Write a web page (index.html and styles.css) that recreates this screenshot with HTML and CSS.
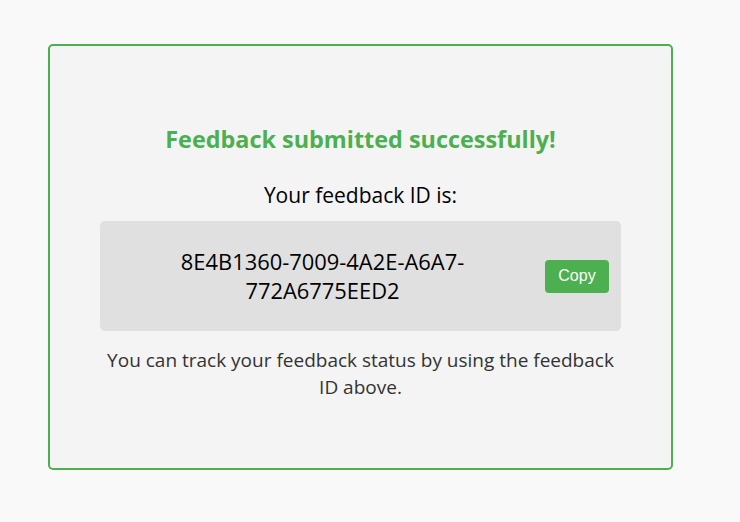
FILE: index.html
```html
<!DOCTYPE html>
<html lang="en">
<head>
<meta charset="utf-8">
<title>Feedback submitted</title>
<link rel="stylesheet" href="styles.css">
</head>
<body>
<div class="card">
  <h2 class="title">Feedback submitted successfully!</h2>
  <p class="label">Your feedback ID is:</p>
  <div class="id-box">
    <span class="id-text">8E4B1360-7009-4A2E-A6A7-772A6775EED2</span>
    <button class="copy-btn" type="button">Copy</button>
  </div>
  <p class="note">You can track your feedback status by using the feedback ID above.</p>
</div>
</body>
</html>
```

FILE: styles.css
```css
html, body {
  margin: 0;
  padding: 0;
}
body {
  background: #f9f9f9;
  font-family: "Open Sans", "Noto Sans", sans-serif;
  padding: 44px 0 0 48px;
  min-height: 100vh;
  box-sizing: border-box;
}
.card {
  width: 625px;
  box-sizing: border-box;
  border: 2px solid #4caf50;
  border-radius: 5px;
  background: #f4f4f4;
  padding: 77px 50px 67px;
  text-align: center;
}
.title {
  margin: 0;
  color: #4caf50;
  font-size: 23.4px;
  line-height: 32px;
  font-weight: 700;
}
.label {
  margin: 26px 0 0;
  color: #000;
  font-size: 21px;
  line-height: 28px;
}
.id-box {
  margin-top: 12px;
  background: #e0e0e0;
  border-radius: 5px;
  padding: 26px 12px;
  display: flex;
  align-items: center;
  gap: 12px;
}
.id-text {
  flex: 1;
  font-size: 21.9px;
  line-height: 29px;
  color: #000;
  padding: 0 20px;
}
.copy-btn {
  width: 64px;
  height: 33px;
  border: none;
  border-radius: 4px;
  background: #4caf50;
  color: #fff;
  font-family: "Liberation Sans", Arial, sans-serif;
  font-size: 16px;
  padding: 0;
  flex: none;
}
.note {
  margin: 16px 0 0;
  color: #333;
  font-size: 19px;
  line-height: 27px;
}
```
